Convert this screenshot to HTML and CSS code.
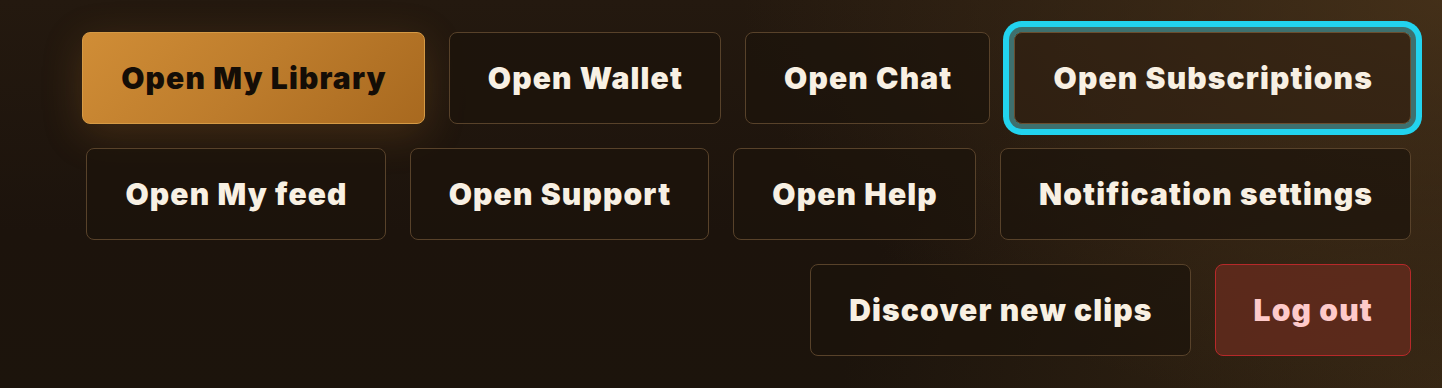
FILE: index.html
```html
<!DOCTYPE html>
<html lang="en">
<head>
<meta charset="utf-8">
<title>Menu</title>
<link rel="stylesheet" href="styles.css">
</head>
<body>
<div class="page">
  <nav class="actions">
    <button class="btn btn-primary">Open My Library</button>
    <button class="btn">Open Wallet</button>
    <button class="btn">Open Chat</button>
    <button class="btn btn-focus">Open Subscriptions</button>
    <button class="btn">Open My feed</button>
    <button class="btn">Open Support</button>
    <button class="btn">Open Help</button>
    <button class="btn">Notification settings</button>
    <button class="btn">Discover new clips</button>
    <button class="btn btn-danger">Log out</button>
  </nav>
</div>
</body>
</html>
```

FILE: styles.css
```css
html, body {
  margin: 0;
  padding: 0;
}

body {
  width: 1442px;
  height: 388px;
  overflow: hidden;
  font-family: "Inter", "Liberation Sans", sans-serif;
  background:
    radial-gradient(ellipse 700px 420px at 1442px 0px, rgba(78, 55, 28, 0.75), rgba(78, 55, 28, 0) 100%),
    radial-gradient(ellipse 600px 380px at 1442px 388px, rgba(70, 50, 25, 0.6), rgba(70, 50, 25, 0) 100%),
    linear-gradient(180deg, #24190f 0%, #1c130c 60%, #1c140c 100%);
}

.page {
  height: 388px;
  box-sizing: border-box;
  padding: 32px 31px 32px 32px;
}

.actions {
  display: flex;
  flex-wrap: wrap;
  justify-content: flex-end;
  gap: 24px;
}

.btn {
  font-family: "Inter", "Liberation Sans", sans-serif;
  font-size: 30px;
  font-weight: 900;
  letter-spacing: 1.15px;
  line-height: 34px;
  padding: 28px 37px 28px 38px;
  border: 1px solid #58422a;
  border-radius: 8px;
  background: rgba(28, 19, 11, 0.72);
  color: #f8f0e3;
  white-space: nowrap;
  cursor: pointer;
}

.btn-primary {
  background: linear-gradient(135deg, #d08d36 0%, #bd7c2c 50%, #a8691f 100%);
  border-color: #d59a45;
  color: #140d06;
  box-shadow: 0 10px 40px rgba(190, 125, 45, 0.22);
}

.btn-focus {
  background: rgba(50, 34, 18, 0.6);
  border-color: #6a4e2f;
  box-shadow:
    0 0 0 5px rgba(62, 112, 110, 1),
    0 0 0 11px #22d3ee;
}

.btn-danger {
  background: rgba(94, 42, 28, 0.92);
  border-color: #b7292a;
  color: #fecaca;
}
```
